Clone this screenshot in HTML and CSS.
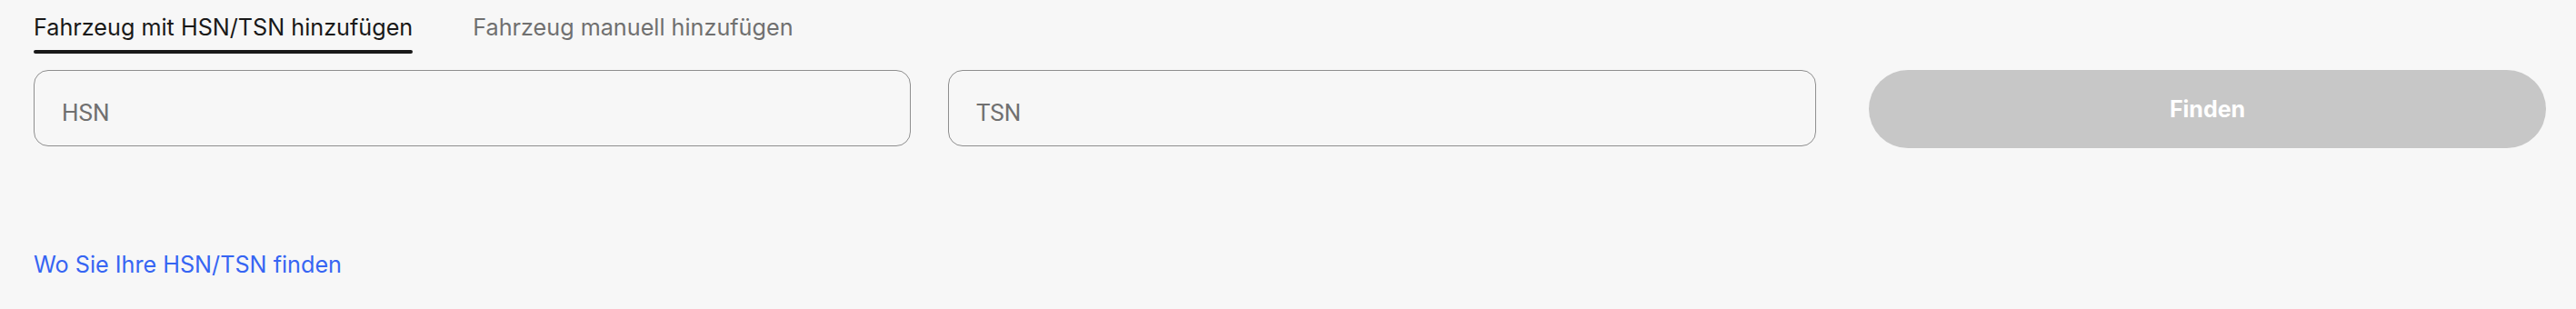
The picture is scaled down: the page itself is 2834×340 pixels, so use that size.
FILE: index.html
```html
<!DOCTYPE html>
<html lang="de">
<head>
<meta charset="utf-8">
<title>Fahrzeug hinzufügen</title>
<link rel="stylesheet" href="styles.css">
</head>
<body>
<div class="page">
  <div class="tabs">
    <div class="tab tab-active">Fahrzeug mit HSN/TSN hinzufügen</div>
    <div class="tab">Fahrzeug manuell hinzufügen</div>
  </div>
  <form class="row">
    <input class="field" type="text" placeholder="HSN">
    <input class="field" type="text" placeholder="TSN">
    <button class="find" type="button">Finden</button>
  </form>
  <a class="help" href="#">Wo Sie Ihre HSN/TSN finden</a>
</div>
</body>
</html>
```
FILE: styles.css
```css
html, body {
  margin: 0;
  padding: 0;
  background: #f7f7f7;
}
.page {
  padding: 14px 33px 0 37px;
  font-family: Inter, "Noto Sans", sans-serif;
  font-size: 25.2px;
  line-height: 32px;
}
.tabs {
  display: flex;
  gap: 66px;
}
.tab {
  color: #707070;
}
.tab::after {
  content: "";
  display: block;
  height: 4px;
  margin-top: 9px;
  border-radius: 2px;
  background: transparent;
}
.tab-active {
  color: #191919;
}
.tab-active::after {
  background: #191919;
}
.row {
  display: grid;
  grid-template-columns: 965px 955px 1fr;
  column-gap: 41px;
  align-items: start;
  margin: 18px 0 0;
}
.field {
  box-sizing: border-box;
  height: 84px;
  margin: 0;
  padding: 10px 30px 0;
  border: 1px solid #8f8f8f;
  border-radius: 16px;
  background: #f7f7f7;
  font-family: Roboto, "Liberation Sans", sans-serif;
  font-size: 26px;
  color: #191919;
  outline: none;
}
.field::placeholder {
  color: #707070;
}
.find {
  margin: 0 0 0 17px;
  height: 86px;
  border: 0;
  border-radius: 43px;
  background: #c7c7c7;
  color: #ffffff;
  font-family: Inter, "Noto Sans", sans-serif;
  font-size: 25px;
  font-weight: 700;
  cursor: default;
}
.help {
  display: inline-block;
  margin-top: 112px;
  color: #3665f3;
  text-decoration: none;
}
```
